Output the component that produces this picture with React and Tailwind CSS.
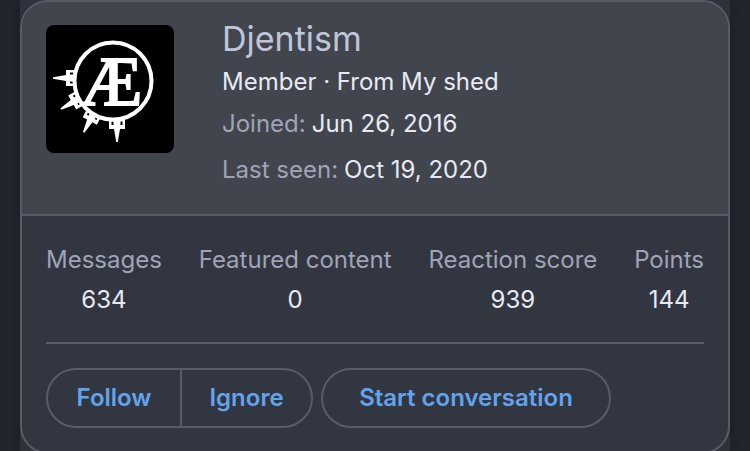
const stats = [
    { label: 'Messages', value: '634' },
    { label: 'Featured content', value: '0' },
    { label: 'Reaction score', value: '939' },
    { label: 'Points', value: '144' },
]

function Spike({ transform }) {
    return (
        <g transform={transform}>
            <path d="M-8 -2H8V9H3L0.8 22H-0.8L-3 9H-8Z" fill="#fff" />
            <path d="M-4.500 1.500V5M4.500 1.500V5" stroke="#000" strokeWidth="2" />
        </g>
    )
}

function Avatar() {
    return (
        <svg viewBox="0 0 128 128" className="block size-32 rounded-lg bg-black" role="img" aria-label="Djentism">
            <Spike transform="translate(71 95)" />
            <Spike transform="translate(48 88) rotate(28)" />
            <Spike transform="translate(34 73) rotate(60)" />
            <Spike transform="translate(29 53) rotate(90)" />
            <circle cx="67" cy="56" r="38.5" fill="#000" stroke="#fff" strokeWidth="4" />
            <text x="34" y="80" fill="#fff" stroke="#fff" strokeWidth="2" fontFamily="'Liberation Serif', serif" fontSize="70">Æ</text>
        </svg>
    )
}

export default function App() {
    return (
        <main className="h-screen overflow-hidden bg-[#23262f] px-5 font-['Inter',sans-serif] text-2xl leading-8 text-[#e8eaf3]">
            <div className="min-h-full bg-[#2e323d] shadow-[0_0_16px_#191c23]">
                <section className="overflow-hidden rounded-[28px] border-2 border-[#595c67] bg-[#323640]">
                    <header className="flex gap-12 border-b-2 border-[#595c67] bg-[#41454d] px-6 pt-[23px] pb-7">
                        <Avatar />
                        <div>
                            <h1 className="-mt-2.5 text-[34px] leading-12 text-[#c0c5da]">Djentism</h1>
                            <p className="mt-[3px]">Member · From My shed</p>
                            <dl className="mt-2.5 space-y-3.5">
                                <div className="flex gap-1.5">
                                    <dt className="text-[#a0a4b6]">Joined:</dt>
                                    <dd>Jun 26, 2016</dd>
                                </div>
                                <div className="flex gap-1.5">
                                    <dt className="text-[#a0a4b6]">Last seen:</dt>
                                    <dd>Oct 19, 2020</dd>
                                </div>
                            </dl>
                        </div>
                    </header>

                    <div className="px-6 pt-7 pb-6">
                        <dl className="flex justify-between text-center">
                            {stats.map((stat) => (
                                <div key={stat.label}>
                                    <dt className="text-[#a0a4b6]">{stat.label}</dt>
                                    <dd className="mt-2">{stat.value}</dd>
                                </div>
                            ))}
                        </dl>

                        <hr className="mt-[26px] mb-6 border-t-2 border-[#595c67]" />

                        <div className="flex gap-2 font-semibold text-[#62a3ec]">
                            <div className="flex rounded-full border-2 border-[#595c67]">
                                <button type="button" className="h-14 min-w-[134px] border-r-2 border-[#595c67] px-6">Follow</button>
                                <button type="button" className="h-14 min-w-[129px] px-6">Ignore</button>
                            </div>
                            <button type="button" className="h-15 min-w-[290px] rounded-full border-2 border-[#595c67] px-6">
                                Start conversation
                            </button>
                        </div>
                    </div>
                </section>
            </div>
        </main>
    )
}
